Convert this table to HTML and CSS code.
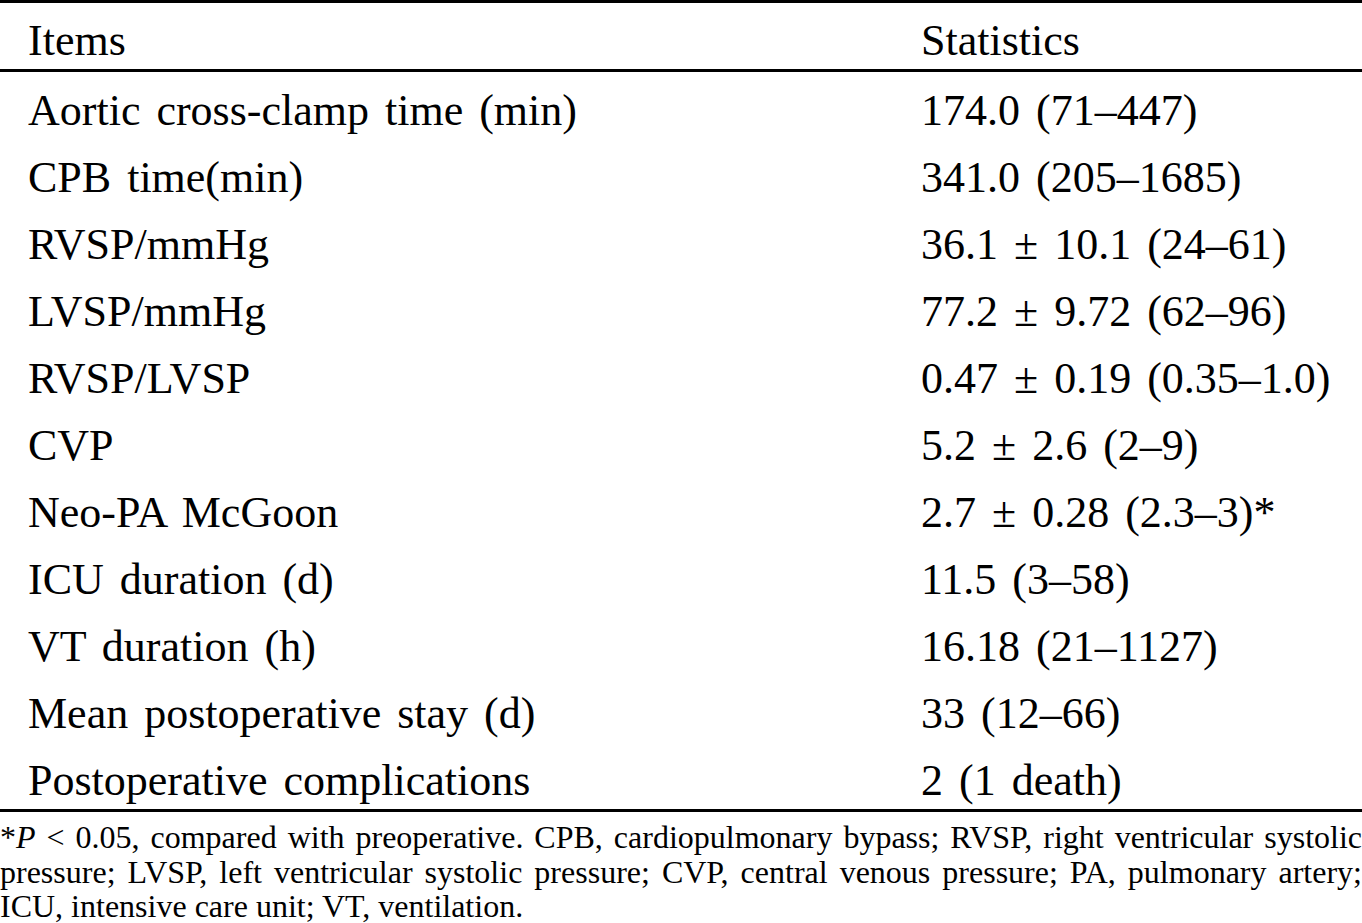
FILE: index.html
```html
<!DOCTYPE html>
<html>
<head>
<meta charset="utf-8">
<link rel="stylesheet" href="styles.css">
</head>
<body>
<div class="wrap">
<table class="stats">
<thead>
<tr><th class="c1">Items</th><th class="c2">Statistics</th></tr>
</thead>
<tbody>
<tr><td class="c1">Aortic cross-clamp time (min)</td><td class="c2">174.0 (71–447)</td></tr>
<tr><td class="c1">CPB time(min)</td><td class="c2">341.0 (205–1685)</td></tr>
<tr><td class="c1">RVSP/mmHg</td><td class="c2">36.1 ± 10.1 (24–61)</td></tr>
<tr><td class="c1">LVSP/mmHg</td><td class="c2">77.2 ± 9.72 (62–96)</td></tr>
<tr><td class="c1">RVSP/LVSP</td><td class="c2">0.47 ± 0.19 (0.35–1.0)</td></tr>
<tr><td class="c1">CVP</td><td class="c2">5.2 ± 2.6 (2–9)</td></tr>
<tr><td class="c1">Neo-PA McGoon</td><td class="c2">2.7 ± 0.28 (2.3–3)*</td></tr>
<tr><td class="c1">ICU duration (d)</td><td class="c2">11.5 (3–58)</td></tr>
<tr><td class="c1">VT duration (h)</td><td class="c2">16.18 (21–1127)</td></tr>
<tr><td class="c1">Mean postoperative stay (d)</td><td class="c2">33 (12–66)</td></tr>
<tr><td class="c1">Postoperative complications</td><td class="c2">2 (1 death)</td></tr>
</tbody>
</table>
<p class="note"><span class="ln">*<i>P</i> &lt; 0.05, compared with preoperative. CPB, cardiopulmonary bypass; RVSP, right ventricular systolic</span> <span class="ln">pressure; LVSP, left ventricular systolic pressure; CVP, central venous pressure; PA, pulmonary artery;</span> <span class="ln last">ICU, intensive care unit; VT, ventilation.</span></p>
</div>
</body>
</html>
```

FILE: styles.css
```css
html, body {
  margin: 0;
  padding: 0;
  background: #fff;
}
.wrap {
  width: 1362px;
  font-family: "Liberation Serif", "Times New Roman", serif;
  color: #000;
}
.stats {
  width: 100%;
  border-collapse: collapse;
  border-top: 3px solid #000;
  border-bottom: 3px solid #000;
  font-size: 44px;
  word-spacing: 5px;
}
.stats th {
  font-weight: normal;
  text-align: left;
  padding: 10px 0 0;
  line-height: 56px;
  border-bottom: 3px solid #000;
  vertical-align: top;
  white-space: nowrap;
}
.stats td {
  padding: 10px 0 0;
  line-height: 57px;
  vertical-align: top;
  white-space: nowrap;
}
.stats .c1 {
  padding-left: 28px;
  width: 893px;
}
.note {
  margin: 0;
  padding-top: 8px;
  font-size: 32px;
  line-height: 34.5px;
}
.note .ln {
  display: block;
  white-space: nowrap;
  text-align: justify;
  text-align-last: justify;
}
.note .ln.last {
  text-align-last: left;
}
```
